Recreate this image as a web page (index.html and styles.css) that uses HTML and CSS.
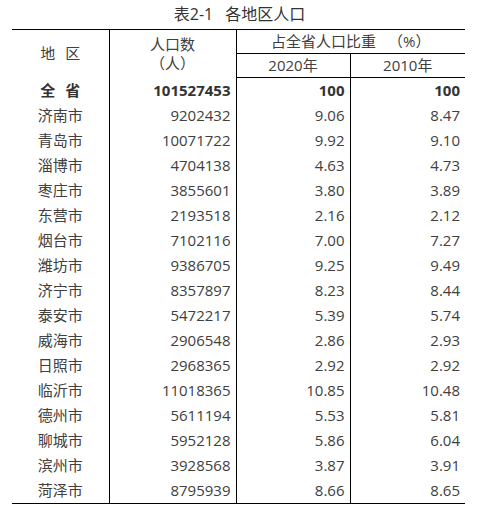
FILE: index.html
```html
<!DOCTYPE html>
<html lang="zh-CN">
<head>
<meta charset="utf-8">
<title>表2-1 各地区人口</title>
<link rel="stylesheet" href="styles.css">
</head>
<body>
<div class="page">
  <h1 class="title">表2-1<span class="tgap"></span>各地区人口</h1>
  <table class="pop">
    <colgroup>
      <col class="c1"><col class="c2"><col class="c3"><col class="c4">
    </colgroup>
    <thead>
      <tr class="h1">
        <th rowspan="2" class="area">地<span class="sp"></span>区</th>
        <th rowspan="2" class="num-h">人口数<br>（人）</th>
        <th colspan="2" class="share">占全省人口比重<span class="pct">（%）</span></th>
      </tr>
      <tr class="h2">
        <th class="yr">2020年</th>
        <th class="yr">2010年</th>
      </tr>
    </thead>
    <tbody>
      <tr class="total"><td class="area">全<span class="sp"></span>省</td><td>101527453</td><td>100</td><td>100</td></tr>
      <tr><td class="area">济南市</td><td>9202432</td><td>9.06</td><td>8.47</td></tr>
      <tr><td class="area">青岛市</td><td>10071722</td><td>9.92</td><td>9.10</td></tr>
      <tr><td class="area">淄博市</td><td>4704138</td><td>4.63</td><td>4.73</td></tr>
      <tr><td class="area">枣庄市</td><td>3855601</td><td>3.80</td><td>3.89</td></tr>
      <tr><td class="area">东营市</td><td>2193518</td><td>2.16</td><td>2.12</td></tr>
      <tr><td class="area">烟台市</td><td>7102116</td><td>7.00</td><td>7.27</td></tr>
      <tr><td class="area">潍坊市</td><td>9386705</td><td>9.25</td><td>9.49</td></tr>
      <tr><td class="area">济宁市</td><td>8357897</td><td>8.23</td><td>8.44</td></tr>
      <tr><td class="area">泰安市</td><td>5472217</td><td>5.39</td><td>5.74</td></tr>
      <tr><td class="area">威海市</td><td>2906548</td><td>2.86</td><td>2.93</td></tr>
      <tr><td class="area">日照市</td><td>2968365</td><td>2.92</td><td>2.92</td></tr>
      <tr><td class="area">临沂市</td><td>11018365</td><td>10.85</td><td>10.48</td></tr>
      <tr><td class="area">德州市</td><td>5611194</td><td>5.53</td><td>5.81</td></tr>
      <tr><td class="area">聊城市</td><td>5952128</td><td>5.86</td><td>6.04</td></tr>
      <tr><td class="area">滨州市</td><td>3928568</td><td>3.87</td><td>3.91</td></tr>
      <tr><td class="area">菏泽市</td><td>8795939</td><td>8.66</td><td>8.65</td></tr>
    </tbody>
  </table>
</div>
</body>
</html>
```

FILE: styles.css
```css
html, body {
  margin: 0;
  padding: 0;
  background: #ffffff;
}

body {
  font-family: "Open Sans", "Noto Sans CJK SC", sans-serif;
  color: #404040;
}

.page {
  width: 478px;
}

.title {
  margin: 0;
  height: 29px;
  line-height: 29px;
  font-size: 16px;
  font-weight: normal;
  text-align: center;
  color: #333333;
  padding-left: 1px;
}

.tgap {
  display: inline-block;
  width: 12px;
}

.pop {
  margin-left: 12px;
  width: 453px;
  table-layout: fixed;
  border-collapse: collapse;
  font-size: 15px;
  border-top: 1px solid #000;
  border-bottom: 1px solid #000;
}

.c1 { width: 97px; }
.c2 { width: 127px; }
.c3 { width: 114px; }
.c4 { width: 115px; }

.pop th,
.pop td {
  padding: 0;
  border-left: 1px solid #000;
  white-space: nowrap;
}

.pop th:first-child,
.pop td:first-child {
  border-left: none;
}

.pop th {
  font-weight: normal;
  text-align: center;
  vertical-align: middle;
}

.h1 th {
  height: 23px;
  line-height: 19px;
}

.h1 .share {
  border-bottom: 1px solid #000;
}

.h2 th {
  height: 23px;
  line-height: 23px;
  border-bottom: 1px solid #000;
}

.h2 .yr:first-child {
  border-left: 1px solid #000;
}

.num-h {
  line-height: 19px;
}

.pct {
  margin-left: 12px;
}

.sp {
  display: inline-block;
  width: 10px;
}

.pop td {
  height: 25px;
  line-height: 25px;
  text-align: right;
  padding-right: 5px;
}

.pop td.area {
  text-align: center;
  padding-right: 0;
}

.pop tr.total td {
  font-weight: bold;
  color: #333333;
}
```
